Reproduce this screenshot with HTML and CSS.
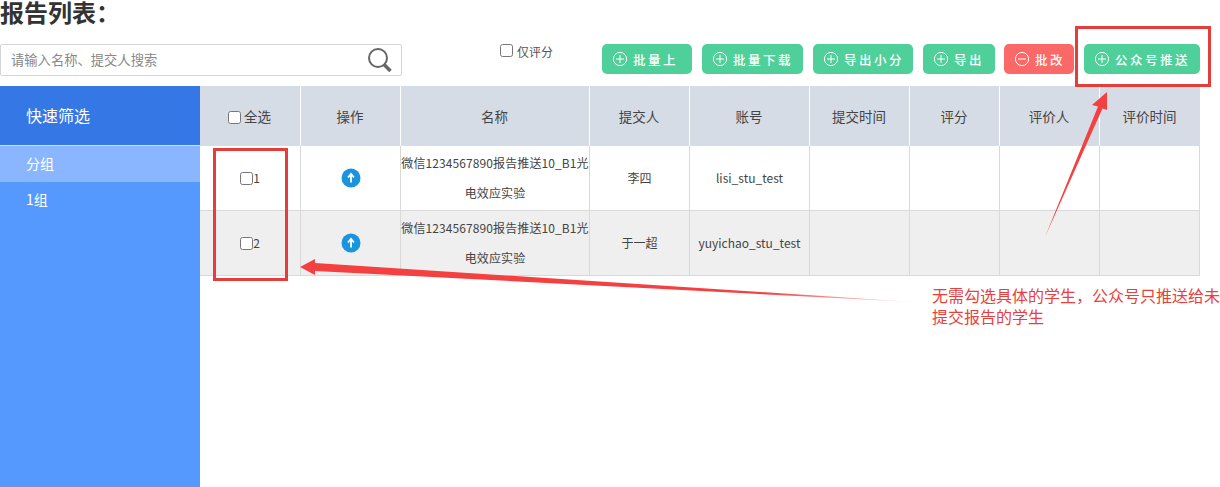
FILE: index.html
```html
<!DOCTYPE html>
<html lang="zh">
<head>
<meta charset="utf-8">
<title>报告列表</title>
<link rel="stylesheet" href="styles.css">
</head>
<body>
<h1 class="title">报告列表：</h1>
<div class="toolbar">
  <div class="search">
    <span class="search-text">请输入名称、提交人搜索</span>
    <svg class="search-icon" width="26" height="28" viewBox="0 0 26 28"><circle cx="11" cy="11" r="9" fill="none" stroke="#666" stroke-width="2"/><path d="M17 17.500l6.500 6.500" stroke="#666" stroke-width="3.500" fill="none"/></svg>
  </div>
  <label class="only"><input type="checkbox" class="cb"><span>仅评分</span></label>
  <div class="btns">
    <a class="btn b1"><svg class="ic" viewBox="0 0 16 16"><circle cx="8" cy="8" r="6.600"/><path d="M8 4v8M4 8h8"/></svg>批量上</a>
    <a class="btn b2"><svg class="ic" viewBox="0 0 16 16"><circle cx="8" cy="8" r="6.600"/><path d="M8 4v8M4 8h8"/></svg>批量下载</a>
    <a class="btn b3"><svg class="ic" viewBox="0 0 16 16"><circle cx="8" cy="8" r="6.600"/><path d="M8 4v8M4 8h8"/></svg>导出小分</a>
    <a class="btn b4"><svg class="ic" viewBox="0 0 16 16"><circle cx="8" cy="8" r="6.600"/><path d="M8 4v8M4 8h8"/></svg>导出</a>
    <a class="btn b5 red"><svg class="ic" viewBox="0 0 16 16"><circle cx="8" cy="8" r="6.600"/><path d="M4 8h8"/></svg>批改</a>
    <a class="btn b6"><svg class="ic" viewBox="0 0 16 16"><circle cx="8" cy="8" r="6.600"/><path d="M8 4v8M4 8h8"/></svg>公众号推送</a>
  </div>
</div>
<div class="main">
  <aside class="side">
    <div class="side-head">快速筛选</div>
    <div class="side-item active">分组</div>
    <div class="side-item">1组</div>
  </aside>
  <table class="tbl">
    <colgroup>
      <col class="c1"><col class="c2"><col class="c3"><col class="c4"><col class="c5"><col class="c6"><col class="c7"><col class="c8"><col class="c9">
    </colgroup>
    <thead>
      <tr>
        <th><input type="checkbox" class="cb"> 全选</th><th>操作</th><th>名称</th><th>提交人</th><th>账号</th><th>提交时间</th><th>评分</th><th>评价人</th><th>评价时间</th>
      </tr>
    </thead>
    <tbody>
      <tr>
        <td><input type="checkbox" class="cb">1</td>
        <td><svg class="up" width="20" height="20" viewBox="0 0 20 20"><circle cx="10" cy="10" r="9.500" fill="#1a94dc"/><path d="M10 14.500V7M7 9.500L10 6l3 3.500" stroke="#fff" stroke-width="1.800" fill="none"/></svg></td>
        <td class="name">微信1234567890报告推送10_B1光电效应实验</td>
        <td>李四</td><td>lisi_stu_test</td><td></td><td></td><td></td><td></td>
      </tr>
      <tr class="alt">
        <td><input type="checkbox" class="cb">2</td>
        <td><svg class="up" width="20" height="20" viewBox="0 0 20 20"><circle cx="10" cy="10" r="9.500" fill="#1a94dc"/><path d="M10 14.500V7M7 9.500L10 6l3 3.500" stroke="#fff" stroke-width="1.800" fill="none"/></svg></td>
        <td class="name">微信1234567890报告推送10_B1光电效应实验</td>
        <td>于一超</td><td>yuyichao_stu_test</td><td></td><td></td><td></td><td></td>
      </tr>
    </tbody>
  </table>
</div>
<svg class="marks" width="1220" height="487" viewBox="0 0 1220 487">
  <defs>
    <linearGradient id="fade" gradientUnits="userSpaceOnUse" x1="300" y1="0" x2="914" y2="0">
      <stop offset="0" stop-color="#f44040"/>
      <stop offset="0.750" stop-color="#f44040"/>
      <stop offset="1" stop-color="#f44040" stop-opacity="0.150"/>
    </linearGradient>
  </defs>
  <rect x="214.500" y="149.500" width="72" height="130" fill="none" stroke="#e53c3c" stroke-width="3"/>
  <rect x="1076.500" y="27.500" width="133" height="58" fill="none" stroke="#e53c3c" stroke-width="3"/>
  <path d="M1045 237L1098 106.500L1092 105L1107 92L1107 110L1102.500 108.500Z" fill="#f44040"/>
  <path d="M914 302L315 271L315 275L300 267L315 259L315 263Z" fill="url(#fade)"/>
</svg>
<p class="note">无需勾选具体的学生，公众号只推送给未提交报告的学生</p>
</body>
</html>
```
FILE: styles.css
```css
* { box-sizing: border-box; }
html, body { margin: 0; padding: 0; }
body {
  width: 1220px;
  height: 487px;
  background: #fff;
  position: relative;
  font-family: "Noto Sans CJK SC", "Liberation Sans", sans-serif;
  color: #333;
  font-size: 12px;
}
.title {
  margin: 0;
  height: 44px;
  font-family: "Liberation Sans", "Noto Sans CJK SC", sans-serif;
  font-size: 24px;
  line-height: 28px;
  font-weight: 700;
  color: #333;
}
.toolbar {
  display: flex;
  height: 42px;
  align-items: flex-start;
}
.search {
  width: 402px;
  height: 32px;
  border: 1px solid #d6d6d6;
  border-radius: 2px;
  display: flex;
  align-items: center;
  justify-content: space-between;
  padding: 0 8px 0 10px;
}
.search-text { font-size: 13.300px; color: #888; line-height: 28px; }
.search-icon { margin-top: 2px; }
.only {
  display: flex;
  align-items: flex-start;
  margin-left: 98px;
  width: 53px;
  font-size: 12px;
  color: #555;
}
.only span { margin-left: 4px; line-height: 16px; }
.cb {
  width: 13px;
  height: 13px;
  margin: 0;
  vertical-align: -2px;
}
.btns {
  display: flex;
  margin-left: 49px;
}
.btn {
  height: 30px;
  margin-right: 10px;
  background: #4fd09a;
  color: #fff;
  border-radius: 5px;
  display: flex;
  align-items: center;
  padding-left: 10px;
  font-size: 12.500px;
  letter-spacing: 2.500px;
  font-weight: 500;
  white-space: nowrap;
}
.red { background: #fb6868; }
.b1 { width: 90px; }
.b2 { width: 101px; }
.b3 { width: 100px; }
.b4 { width: 72px; margin-right: 9px; }
.b5 { width: 70px; }
.b6 { width: 116px; margin-right: 0; }
.ic {
  width: 16px;
  height: 16px;
  margin-right: 5px;
  flex: none;
  fill: none;
  stroke: #fff;
  stroke-width: 1;
}
.main {
  display: flex;
  height: 401px;
}
.side {
  width: 200px;
  background: #5599ff;
  color: #fff;
  flex: none;
}
.side-head {
  height: 60px;
  background: #3578e5;
  border-bottom: 1px solid #cfe0ff;
  padding-left: 26px;
  line-height: 59px;
  font-size: 16px;
}
.side-item {
  height: 36px;
  line-height: 35px;
  padding-left: 26px;
  font-size: 14px;
}
.active { background: #8ab6ff; }
.tbl {
  width: 1000px;
  table-layout: fixed;
  border-collapse: separate;
  border-spacing: 0;
  align-self: flex-start;
}
.c1 { width: 101px; }
.c2 { width: 100px; }
.c3 { width: 189px; }
.c4 { width: 100px; }
.c5 { width: 120px; }
.c6 { width: 100px; }
.c7 { width: 90px; }
.c8 { width: 100px; }
.c9 { width: 100px; }
.tbl th {
  height: 60px;
  background: #d6dce5;
  border-right: 1px solid #fff;
  font-weight: 400;
  font-size: 13.500px;
  color: #444;
  padding: 0 1px 0 0;
}
.tbl th:last-child { border-right: 0; }
.tbl td {
  height: 65px;
  border-right: 1px solid #d9d9d9;
  border-bottom: 1px solid #d9d9d9;
  text-align: center;
  font-size: 12px;
  color: #444;
  padding: 0 0 2px;
}
.alt td { background: #efefef; }
.tbl .name { line-height: 30px; letter-spacing: 0.100px; padding: 0; }
.up { display: block; margin: 2px auto 0; }
.marks {
  position: absolute;
  left: 0;
  top: 0;
  pointer-events: none;
}
.note {
  position: absolute;
  left: 932px;
  top: 285px;
  width: 288px;
  margin: 0;
  font-size: 16px;
  line-height: 21px;
  color: #e8403c;
}
```
